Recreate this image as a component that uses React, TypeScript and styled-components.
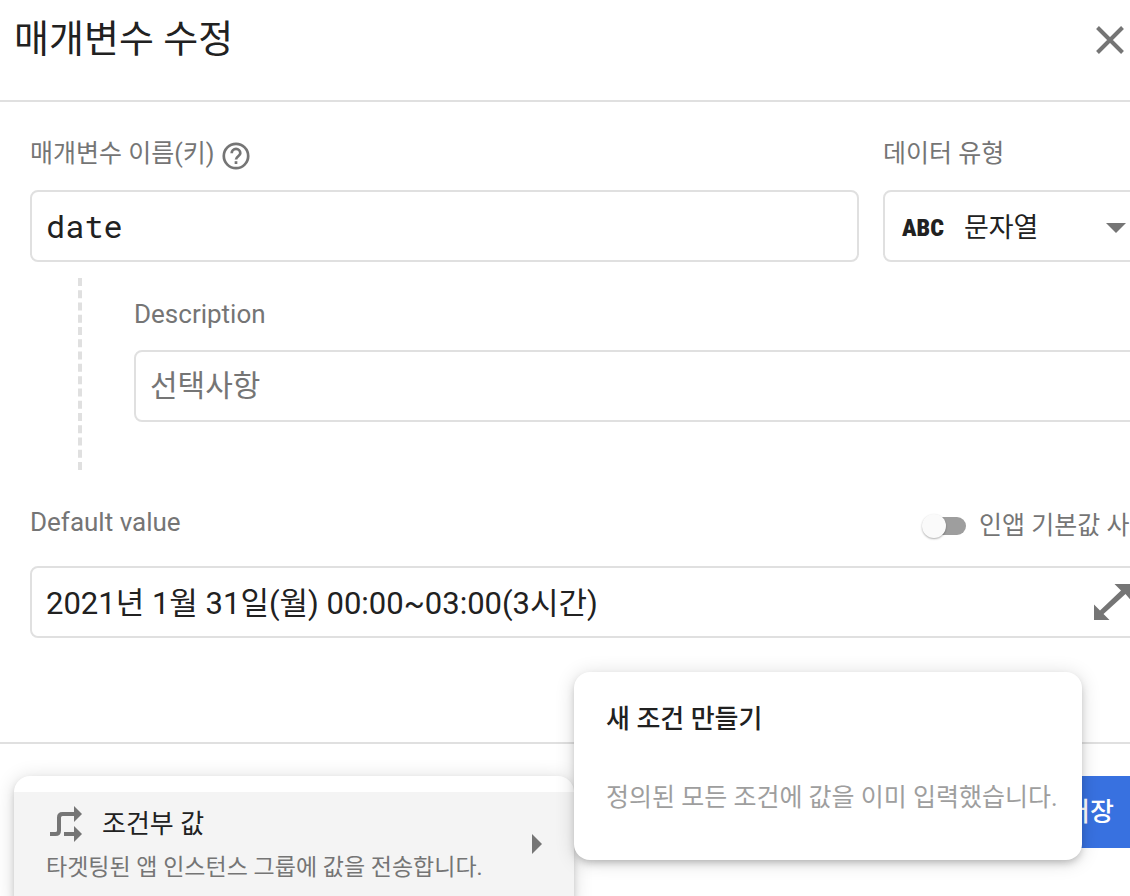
import React from "react";
import styled, { createGlobalStyle } from "styled-components";

const ink = "#212121";
const muted = "#757575";
const line = "#e0e0e0";
const sans = `Roboto, "Noto Sans CJK KR", sans-serif`;

const GlobalStyle = createGlobalStyle`
  *, *::before, *::after { box-sizing: border-box; }
  body { margin: 0; background: #fff; color: ${ink}; font-family: ${sans}; }
  button, input, select { font-family: inherit; color: inherit; }
`;

const Dialog = styled.main`
  display: flex;
  flex-direction: column;
  height: 100vh;
  overflow: hidden;
`;

const Header = styled.header`
  display: flex;
  flex: none;
  align-items: flex-start;
  justify-content: space-between;
  height: 102px;
  padding: 12px 0 0 14px;
  border-bottom: 2px solid ${line};
`;

const Title = styled.h1`
  margin: 0;
  font-size: 38px;
  line-height: 54px;
  font-weight: 400;
`;

const CloseButton = styled.button`
  display: flex;
  width: 40px;
  height: 56px;
  padding: 0;
  align-items: center;
  justify-content: center;
  border: 0;
  background: none;
  cursor: pointer;
`;

const Body = styled.section`
  flex: none;
  width: calc(100% + 24px);
  padding: 36px 0 104px 30px;
`;

const FieldRow = styled.div`
  display: flex;
  gap: 24px;
`;

const Field = styled.div<{ $width?: number }>`
  display: flex;
  flex-direction: column;
  gap: 20px;
  min-width: 0;
  flex: ${(p) => (p.$width ? `0 0 ${p.$width}px` : "1 1 0")};
`;

const LabelRow = styled.div<{ $gap?: number }>`
  display: flex;
  align-items: center;
  gap: ${(p) => p.$gap ?? 8}px;
  height: 32px;
  white-space: nowrap;
`;

const Label = styled.label<{ $latin?: boolean }>`
  color: ${muted};
  font-size: ${(p) => (p.$latin ? 26 : 25)}px;
  line-height: 32px;
`;

const HelpButton = styled.button`
  display: flex;
  padding: 4px 0 0;
  border: 0;
  background: none;
`;

const TextInput = styled.input<{ $mono?: boolean }>`
  width: 100%;
  height: 72px;
  padding: 0 14px 2px;
  border: 2px solid ${line};
  border-radius: 8px;
  background: #fff;
  font-size: ${(p) => (p.$mono ? 32 : 30)}px;
  ${(p) => p.$mono && `font-family: "Roboto Mono", "DejaVu Sans Mono", monospace;`}
  outline: 0;
  &::placeholder { color: ${muted}; opacity: 1; }
`;

const SelectBox = styled.div`
  display: flex;
  align-items: center;
  gap: 20px;
  height: 72px;
  padding: 4px 26px 0 17px;
  border: 2px solid ${line};
  border-radius: 8px;
`;

const TypeBadge = styled.span`
  font-family: "Roboto Condensed", Roboto, sans-serif;
  font-weight: 900;
  font-size: 24px;
  line-height: 32px;
`;

const Select = styled.select`
  appearance: none;
  flex: 1;
  min-width: 0;
  height: 100%;
  padding: 0;
  border: 0;
  background: none;
  font-size: 27px;
  outline: 0;
`;

const Nested = styled.div`
  margin: 16px 0 0 48px;
  padding: 20px 0 48px 52px;
  border-left: 4px dashed ${line};
`;

const ValueField = styled.div`
  display: flex;
  flex-direction: column;
  gap: 28px;
  margin-top: 36px;
`;

const ValueHead = styled.div`
  display: flex;
  justify-content: space-between;
`;

const Toggle = styled.input`
  appearance: none;
  position: relative;
  display: flex;
  align-items: center;
  width: 44px;
  height: 24px;
  margin: 8px 0 0;
  &::before {
    content: "";
    width: 36px;
    height: 18px;
    margin-left: 8px;
    border-radius: 9px;
    background: #9e9e9e;
  }
  &::after {
    content: "";
    position: absolute;
    left: 0;
    width: 24px;
    height: 24px;
    border-radius: 50%;
    background: #fafafa;
    box-shadow: 0 1px 2px rgba(0, 0, 0, 0.32);
  }
`;

const ToggleLabel = styled(Label)`
  padding-top: 8px;
`;

const ToggleGroup = styled(LabelRow)`
  width: 232px;
`;

const ValueBox = styled.div`
  display: flex;
  align-items: center;
  height: 72px;
  padding-right: 20px;
  border: 2px solid ${line};
  border-radius: 8px;
`;

const ValueInput = styled(TextInput)`
  flex: 1;
  height: 100%;
  padding-bottom: 4px;
  border: 0;
  font-size: 31px;
`;

const IconButton = styled.button`
  display: flex;
  padding: 0;
  border: 0;
  background: none;
`;

const Footer = styled.footer`
  position: relative;
  display: flex;
  flex: 1 0 auto;
  align-items: flex-start;
  justify-content: flex-end;
  width: calc(100% + 16px);
  padding-top: 32px;
  border-top: 2px solid ${line};
`;

const SaveButton = styled.button`
  width: 112px;
  height: 72px;
  padding: 0 0 6px;
  border: 0;
  background: #3871e0;
  color: #fff;
  font-size: 26px;
  font-weight: 500;
`;

const Popup = styled.div`
  position: absolute;
  border-radius: 16px;
  background: #fff;
  box-shadow: 0 4px 8px -2px rgba(0, 0, 0, 0.26), 0 2px 20px rgba(0, 0, 0, 0.14);
`;

const MenuPopup = styled(Popup)`
  top: 32px;
  left: 14px;
  width: 560px;
  padding: 16px 0;
`;

const MenuItem = styled.button`
  display: flex;
  align-items: center;
  justify-content: space-between;
  width: 100%;
  padding: 12px 32px;
  border: 0;
  background: #f4f4f4;
  text-align: left;
`;

const MenuHead = styled.span`
  display: flex;
  align-items: center;
  gap: 18px;
  padding-left: 4px;
  font-size: 26px;
  line-height: 40px;
`;

const MenuNote = styled.span`
  display: block;
  padding-top: 8px;
  color: ${muted};
  font-size: 23px;
  line-height: 32px;
`;

const SubmenuPopup = styled(Popup)`
  top: -72px;
  left: 574px;
  width: 508px;
  padding: 16px 0 42px;
`;

const SubmenuItem = styled.button`
  display: block;
  width: 100%;
  padding: 11px 32px 8px;
  border: 0;
  background: none;
  text-align: left;
  white-space: nowrap;
  font-size: 26px;
  line-height: 40px;
  font-weight: 500;
`;

const SubmenuNote = styled.p`
  margin: 0;
  padding: 31px 32px 0;
  color: #9e9e9e;
  font-size: 25px;
  line-height: 40px;
  white-space: nowrap;
`;

const CloseIcon = () => (
  <svg width="28" height="28" viewBox="0 0 28 28" stroke={muted} strokeWidth="4" aria-hidden="true">
    <path d="M1.5 1.5 26.5 26.5M26.5 1.5 1.5 26.5" />
  </svg>
);

const HelpIcon = () => (
  <svg width="28" height="28" viewBox="0 0 28 28" fill="none" stroke={muted} strokeWidth="2.7" aria-hidden="true">
    <circle cx="14" cy="14" r="12.2" />
    <path d="M9.7 11.2a4.3 4.3 0 0 1 8.6 0c0 2.9-4.3 3.2-4.3 6.4" />
    <path d="M14 19.2v2.8" />
  </svg>
);

const DownIcon = () => (
  <svg width="20" height="10" viewBox="0 0 20 10" fill={muted} aria-hidden="true">
    <path d="M0 0h20L10 10z" />
  </svg>
);

const RightIcon = () => (
  <svg width="10" height="20" viewBox="0 0 10 20" fill={muted} aria-hidden="true">
    <path d="M0 0v20l10-10z" />
  </svg>
);

const ExpandIcon = () => (
  <svg width="38" height="36" viewBox="0 0 38 36" fill={muted} aria-hidden="true">
    <path d="M20.5 0H37V16.5L31.5 10L9.5 30L15.5 36H0V20.5L6 26.5L27 6.5z" />
  </svg>
);

const BranchIcon = () => (
  <svg width="34" height="36" viewBox="0 0 34 36" aria-hidden="true">
    <path d="M0 28h5.5q3.5 0 3.5-3.5V11.5q0-3.5 3.5-3.5H26M14 28h12" fill="none" stroke={muted} strokeWidth="4" />
    <path d="M24 0v16l8-8zM24 20v16l8-8z" fill={muted} />
  </svg>
);

export default function App() {
  return (
    <>
      <GlobalStyle />
      <Dialog>
        <Header>
          <Title>매개변수 수정</Title>
          <CloseButton aria-label="닫기">
            <CloseIcon />
          </CloseButton>
        </Header>

        <Body>
          <FieldRow>
            <Field>
              <LabelRow>
                <Label htmlFor="key">매개변수 이름(키)</Label>
                <HelpButton aria-label="도움말">
                  <HelpIcon />
                </HelpButton>
              </LabelRow>
              <TextInput id="key" $mono defaultValue="date" />
            </Field>
            <Field $width={271}>
              <LabelRow>
                <Label htmlFor="type">데이터 유형</Label>
              </LabelRow>
              <SelectBox>
                <TypeBadge>ABC</TypeBadge>
                <Select id="type" defaultValue="string">
                  <option value="string">문자열</option>
                </Select>
                <DownIcon />
              </SelectBox>
            </Field>
          </FieldRow>

          <Nested>
            <Field>
              <LabelRow>
                <Label $latin htmlFor="description">Description</Label>
              </LabelRow>
              <TextInput id="description" placeholder="선택사항" />
            </Field>
          </Nested>

          <ValueField>
            <ValueHead>
              <LabelRow>
                <Label $latin htmlFor="value">Default value</Label>
              </LabelRow>
              <ToggleGroup $gap={13}>
                <Toggle id="in-app" type="checkbox" />
                <ToggleLabel htmlFor="in-app">인앱 기본값 사용</ToggleLabel>
              </ToggleGroup>
            </ValueHead>
            <ValueBox>
              <ValueInput id="value" defaultValue="2021년 1월 31일(월) 00:00~03:00(3시간)" />
              <IconButton aria-label="펼치기">
                <ExpandIcon />
              </IconButton>
            </ValueBox>
          </ValueField>
        </Body>

        <Footer>
          <SaveButton>저장</SaveButton>
          <MenuPopup>
            <MenuItem>
              <span>
                <MenuHead>
                  <BranchIcon />
                  조건부 값
                </MenuHead>
                <MenuNote>타겟팅된 앱 인스턴스 그룹에 값을 전송합니다.</MenuNote>
              </span>
              <RightIcon />
            </MenuItem>
          </MenuPopup>
          <SubmenuPopup>
            <SubmenuItem>새 조건 만들기</SubmenuItem>
            <SubmenuNote>정의된 모든 조건에 값을 이미 입력했습니다.</SubmenuNote>
          </SubmenuPopup>
        </Footer>
      </Dialog>
    </>
  );
}
